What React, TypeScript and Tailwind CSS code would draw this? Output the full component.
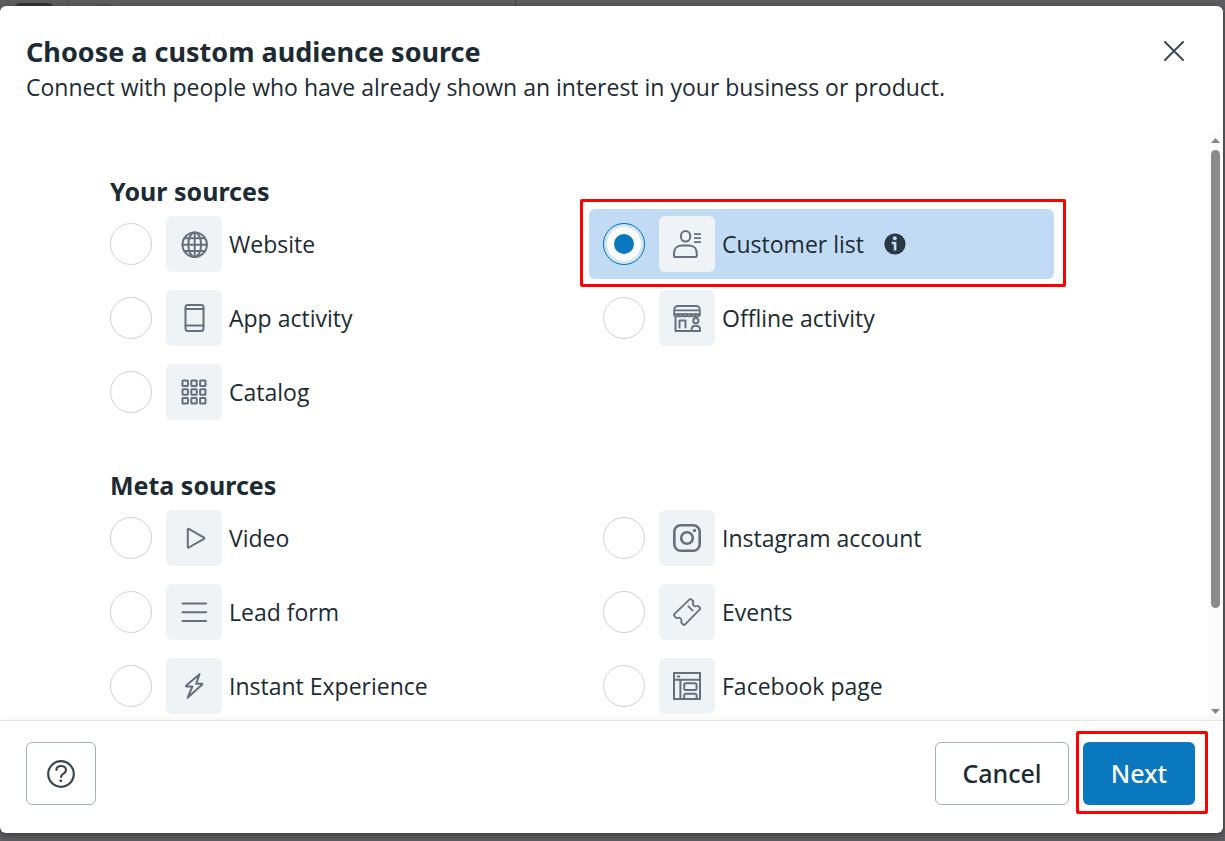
import React, { useState } from 'react';

interface Source {
  id: string;
  label: string;
  icon: React.ReactNode;
  hasInfo?: boolean;
  marked?: boolean;
}

const Icon = ({ children }: { children: React.ReactNode }) => (
  <svg
    viewBox="0 0 28 28"
    className="h-7 w-7"
    fill="none"
    stroke="currentColor"
    strokeWidth="2"
    strokeLinecap="round"
    strokeLinejoin="round"
    aria-hidden="true"
  >
    {children}
  </svg>
);

const GlobeIcon = () => (
  <Icon>
    <circle cx="14.7" cy="14.7" r="12.2" />
    <ellipse cx="14.7" cy="14.7" rx="6.4" ry="12.2" />
    <path d="M14.7 2.5v24.4M2.5 14.7h24.4M4.4 8.3h20.6M4.4 21.1h20.6" />
  </Icon>
);

const PhoneIcon = () => (
  <Icon>
    <rect x="5.500" y="1" width="18" height="26" rx="2.4" />
    <path d="M5.500 5h18M5.500 21.500h18" />
  </Icon>
);

const CatalogIcon = () => (
  <Icon>
    {[2.5, 11.3, 20.1].map((y) =>
      [2.5, 11.3, 20.1].map((x) => (
        <rect key={`${x}-${y}`} x={x} y={y} width="5.4" height="5.4" rx="0.6" />
      ))
    )}
  </Icon>
);

const CustomerIcon = () => (
  <Icon>
    <rect x="8" y="1" width="9.2" height="10.6" rx="4.600" />
    <path d="M2 27c-.6 0-1-.4-1-1v-2.600c0-4.600 3-7.900 7.600-7.900h7.600c4.600 0 7.600 3.300 7.600 7.900V26c0 .6-.4 1-1 1z" />
    <path d="M21 4.200h7M21 8.200h7M21 12.200h7" strokeLinecap="butt" strokeWidth="1.700" />
  </Icon>
);

const StoreIcon = () => (
  <Icon>
    <path
      strokeWidth="1.800"
      d="M4.600 2h18.800c1.800 0 3.400 1.600 3.400 3.800v4.400H1.200V5.800C1.200 3.600 2.800 2 4.600 2zM1.600 6.400h24.800"
    />
    <path
      strokeWidth="1.800"
      d="M1.200 10.200c0 3 4.200 3 4.200 0 0 3 4.300 3 4.300 0 0 3 4.300 3 4.300 0 0 3 4.300 3 4.300 0 0 3 4.300 3 4.300 0 0 3 4.200 3 4.200 0"
    />
    <path d="M2.500 13v14h14.800M6.500 23.500v-7h6v7" />
    <circle cx="22.800" cy="16.700" r="2.600" />
    <path d="M18.600 27v-1.600c0-2.200 1.700-3.600 4.200-3.600s4.200 1.400 4.200 3.600V27z" />
  </Icon>
);

const PlayIcon = () => (
  <Icon>
    <path d="M7.800 5.400v17.600c0 .6.500.8 1 .5l15.200-8.700c.5-.3.500-.9 0-1.200L8.800 4.900c-.5-.3-1-.1-1 .5z" />
  </Icon>
);

const LinesIcon = () => (
  <Icon>
    <path d="M2.500 5.500h23.600M2.500 14.200h23.600M2.500 23h23.600" />
  </Icon>
);

const BoltIcon = () => (
  <Icon>
    <path d="M19.500 2.200 6.200 13.600c-.4.400-.2.900.3.900h5.900L7.600 25.800 22.200 12.600c.4-.4.200-.9-.4-.9h-5.600z" />
  </Icon>
);

const InstagramIcon = () => (
  <Icon>
    <rect x="1.300" y="1.300" width="25.400" height="25.400" rx="6.500" strokeWidth="2.600" />
    <circle cx="14" cy="14" r="5.800" strokeWidth="2.600" />
    <circle cx="21.500" cy="6.500" r="1.700" fill="currentColor" stroke="none" />
  </Icon>
);

const TicketIcon = () => (
  <Icon>
    <path
      strokeWidth="1.800"
      d="M16.600 1.300c.5-.5 1.200-.5 1.700 0l1.700 1.700c.3.300.3.700.1 1.100-.6 1.300-.3 2.600.6 3.400.9.900 2.200 1.100 3.500.5.400-.2.800-.1 1.100.2l1.500 1.500c.5.500.5 1.200 0 1.700L11.900 26.600c-.5.500-1.200.5-1.700 0l-1.700-1.700c-.3-.3-.3-.7-.2-1.100.5-1.200.2-2.400-.7-3.200-.9-.9-2.100-1.100-3.300-.6-.4.200-.8.100-1.100-.2l-1.900-1.900c-.5-.5-.5-1.200 0-1.700zM15.400 8.400l4.200 4.200"
    />
  </Icon>
);

const PageIcon = () => (
  <Icon>
    <path strokeLinejoin="miter" d="M1 1h26v26H1zM1 7.800h26M7.400 7.800v19.200" />
    <path d="M4.700 4.400h1.600" />
    <rect x="11.200" y="11.300" width="12.400" height="6.800" rx="1.500" />
    <path d="M11.200 27v-3.700c0-.9.600-1.500 1.500-1.500h9.400c.9 0 1.500.6 1.500 1.500V27" />
  </Icon>
);

const yourSources: Source[] = [
  { id: 'website', label: 'Website', icon: <GlobeIcon /> },
  { id: 'customer-list', label: 'Customer list', icon: <CustomerIcon />, hasInfo: true, marked: true },
  { id: 'app-activity', label: 'App activity', icon: <PhoneIcon /> },
  { id: 'offline-activity', label: 'Offline activity', icon: <StoreIcon /> },
  { id: 'catalog', label: 'Catalog', icon: <CatalogIcon /> },
];

const metaSources: Source[] = [
  { id: 'video', label: 'Video', icon: <PlayIcon /> },
  { id: 'instagram', label: 'Instagram account', icon: <InstagramIcon /> },
  { id: 'lead-form', label: 'Lead form', icon: <LinesIcon /> },
  { id: 'events', label: 'Events', icon: <TicketIcon /> },
  { id: 'instant-experience', label: 'Instant Experience', icon: <BoltIcon /> },
  { id: 'facebook-page', label: 'Facebook page', icon: <PageIcon /> },
];

interface SourceGroupProps {
  title: string;
  sources: Source[];
  selected: string;
  onSelect: (id: string) => void;
}

const SourceGroup: React.FC<SourceGroupProps> = ({ title, sources, selected, onSelect }) => (
  <section>
    <h2 className="mb-0.5 pl-3.5 font-['Noto_Sans'] text-[25px] leading-8 font-bold">{title}</h2>
    <div className="grid grid-cols-2 gap-x-7 gap-y-1">
      {sources.map((source) => (
        <label
          key={source.id}
          htmlFor={source.id}
          className={`relative flex h-[70px] cursor-pointer items-center rounded-md pl-3.5 ${
            selected === source.id ? 'bg-[#c2dbf5]' : ''
          }`}
        >
          <input
            type="radio"
            id={source.id}
            name="source"
            checked={selected === source.id}
            onChange={() => onSelect(source.id)}
            className="h-[42px] w-[42px] shrink-0 appearance-none rounded-full border border-[#cbd2d9] bg-white checked:border-[#0a78be] checked:bg-[#0a78be] checked:shadow-[inset_0_0_0_3px_#d3e5f3,inset_0_0_0_10px_#fff]"
          />
          <span className="ml-3.5 flex h-14 w-14 shrink-0 items-center justify-center rounded-md bg-[#eff3f6] text-[#676f7b]">
            {source.icon}
          </span>
          <span className="ml-[7px] text-[23px] leading-8">{source.label}</span>
          {source.hasInfo && (
            <svg viewBox="0 0 22 22" className="ml-5 h-[22px] w-[22px] text-[#283943]" aria-hidden="true">
              <circle cx="11" cy="11" r="10.600" fill="currentColor" />
              <circle cx="10.800" cy="5.300" r="2" fill="#c2dbf5" />
              <path d="M7.600 8.800h4.800v8.600H9.700v-6.200H7.600z" fill="#c2dbf5" />
            </svg>
          )}
          {source.marked && (
            <span className="pointer-events-none absolute -top-2.5 -right-3 -bottom-2 -left-[9px] rounded-xs border-3 border-[#fe0000]" />
          )}
        </label>
      ))}
    </div>
  </section>
);

export default function App() {
  const [selected, setSelected] = useState('customer-list');

  return (
    <div className="relative flex h-screen flex-col overflow-hidden bg-[#5f5e60] pt-1.5 pr-0.5 pb-2 font-['Open_Sans',sans-serif] text-[#1c2b33]">
      {/* dimmed page behind the dialog */}
      <div className="absolute top-0 left-0 flex h-1.5 w-full overflow-hidden">
        <span className="mt-[3px] ml-3.5 h-4 w-10 rounded-md bg-[#383735]" />
        <span className="ml-3.5 w-px bg-[#4e4e50]" />
        <span className="mt-[3px] ml-5 h-8 w-8 rounded-full bg-[#555557]" />
        <span className="ml-[394px] w-px bg-[#454547]" />
      </div>

      <div
        role="dialog"
        aria-labelledby="dialog-title"
        className="relative flex min-h-0 flex-1 flex-col rounded-md bg-white shadow-[0_2px_8px_rgba(0,0,0,0.4)]"
      >
        <header className="flex items-start justify-between px-[26px] pt-7 pb-7">
          <div>
            <h1 id="dialog-title" className="font-['Noto_Sans'] text-[27px] leading-9 font-bold">
              Choose a custom audience source
            </h1>
            <p className="text-[23px] leading-[34px]">
              Connect with people who have already shown an interest in your business or product.
            </p>
          </div>
          <button type="button" aria-label="Close" className="mt-[3px] mr-[9px] p-1">
            <svg viewBox="0 0 20 20" className="h-5 w-5" stroke="#3c4a52" strokeWidth="2" strokeLinecap="round">
              <path d="M1 1l18 18M19 1L1 19" />
            </svg>
          </button>
        </header>

        <div className="flex min-h-0 flex-1">
          <div className="flex flex-1 flex-col gap-[42px] overflow-hidden pt-[43px] pr-[154px] pl-24">
            <SourceGroup title="Your sources" sources={yourSources} selected={selected} onSelect={setSelected} />
            <SourceGroup title="Meta sources" sources={metaSources} selected={selected} onSelect={setSelected} />
          </div>
          <div className="flex w-[15px] flex-col items-center bg-[#fcfcfc] py-1.5">
            <svg viewBox="0 0 9 5" className="h-[5px] w-[9px]" fill="#858585">
              <path d="M0 5 4.500 0 9 5z" />
            </svg>
            <span className="mt-[7px] h-[458px] w-[9px] rounded-full bg-[#8b8b8b]" />
            <svg viewBox="0 0 9 5" className="mt-auto h-[5px] w-[9px]" fill="#858585">
              <path d="M0 0h9L4.500 5z" />
            </svg>
          </div>
        </div>

        <footer className="relative flex items-center border-t border-[#e6e6e6] px-[26px] pt-[21px] pb-7 shadow-[0_-2px_6px_rgba(0,0,0,0.04)]">
          <button
            type="button"
            aria-label="Help"
            className="flex h-[63px] w-[70px] items-center justify-center rounded-md border border-[#a3b1bf]"
          >
            <svg
              viewBox="0 0 28 28"
              className="h-7 w-7"
              fill="none"
              stroke="#3a474f"
              strokeWidth="2.200"
              strokeLinecap="round"
              strokeLinejoin="round"
            >
              <circle cx="14" cy="14" r="12.800" />
              <path d="M9.300 10c.3-2.500 2.200-4 4.800-4 2.800 0 4.900 1.600 4.900 4.100 0 1.900-1.200 2.900-2.800 3.800-1.500.8-2.100 1.500-2.100 3.100" />
              <circle cx="13.800" cy="20.800" r="1.400" fill="#3a474f" stroke="none" />
            </svg>
          </button>
          <button
            type="button"
            className="ml-auto h-[63px] w-[134px] rounded-md border border-[#a3b1bf] font-['Noto_Sans'] text-[25px] font-medium"
          >
            Cancel
          </button>
          <div className="relative mr-0.5 ml-3.5">
            <button
              type="button"
              className="h-[63px] w-28 rounded-md bg-[#0a78be] font-['Noto_Sans'] text-[25px] font-medium text-white"
            >
              Next
            </button>
            <span className="pointer-events-none absolute -top-[11px] -right-[13px] -bottom-[9px] -left-[7px] rounded-xs border-3 border-[#fe0000]" />
          </div>
        </footer>
      </div>
    </div>
  );
}
